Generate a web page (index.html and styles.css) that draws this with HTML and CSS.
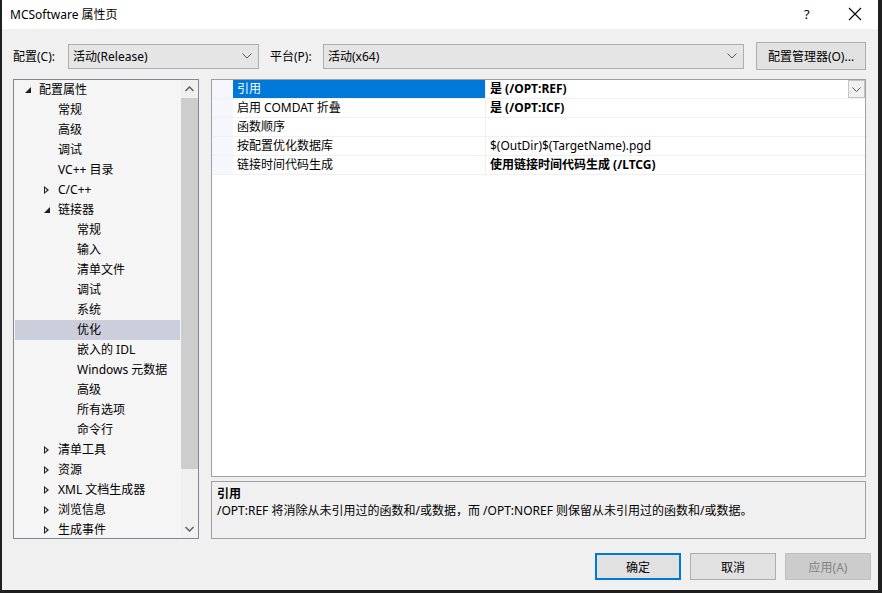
FILE: index.html
```html
<!DOCTYPE html>
<html lang="zh-CN">
<head>
    <meta charset="UTF-8">
    <title>MCSoftware 属性页</title>
    <link rel="stylesheet" href="styles.css">
</head>
<body>
<div class="window">
    <div class="titlebar">
        <span class="title">MCSoftware 属性页</span>
        <span class="help">?</span>
        <svg class="close" width="14" height="14" viewBox="0 0 14 14">
            <path d="M1 1 L13 13 M13 1 L1 13" stroke="#000" stroke-width="1.1" fill="none"/>
        </svg>
    </div>

    <div class="content">
        <div class="config-row">
            <span class="label">配置(C):</span>
            <div class="combo combo-config">
                <span>活动(Release)</span>
                <svg width="10" height="6" viewBox="0 0 10 6"><path d="M0.5 0.5 L5 5 L9.5 0.5" stroke="#555" fill="none"/></svg>
            </div>
            <span class="label label-platform">平台(P):</span>
            <div class="combo combo-platform">
                <span>活动(x64)</span>
                <svg width="10" height="6" viewBox="0 0 10 6"><path d="M0.5 0.5 L5 5 L9.5 0.5" stroke="#555" fill="none"/></svg>
            </div>
            <button class="btn btn-manager">配置管理器(O)...</button>
        </div>

        <div class="main">
            <!-- left tree -->
            <div class="tree">
                <div class="tree-items">
                    <div class="node lv0"><span class="exp open"></span>配置属性</div>
                    <div class="node lv1"><span class="exp"></span>常规</div>
                    <div class="node lv1"><span class="exp"></span>高级</div>
                    <div class="node lv1"><span class="exp"></span>调试</div>
                    <div class="node lv1"><span class="exp"></span>VC++ 目录</div>
                    <div class="node lv0b"><span class="exp closed"></span>C/C++</div>
                    <div class="node lv0b"><span class="exp open"></span>链接器</div>
                    <div class="node lv2">常规</div>
                    <div class="node lv2">输入</div>
                    <div class="node lv2">清单文件</div>
                    <div class="node lv2">调试</div>
                    <div class="node lv2">系统</div>
                    <div class="node lv2 selected">优化</div>
                    <div class="node lv2">嵌入的 IDL</div>
                    <div class="node lv2">Windows 元数据</div>
                    <div class="node lv2">高级</div>
                    <div class="node lv2">所有选项</div>
                    <div class="node lv2">命令行</div>
                    <div class="node lv0b"><span class="exp closed"></span>清单工具</div>
                    <div class="node lv0b"><span class="exp closed"></span>资源</div>
                    <div class="node lv0b"><span class="exp closed"></span>XML 文档生成器</div>
                    <div class="node lv0b"><span class="exp closed"></span>浏览信息</div>
                    <div class="node lv0b"><span class="exp closed"></span>生成事件</div>
                </div>
                <div class="scrollbar">
                    <div class="sb-arrow">
                        <svg width="9" height="6" viewBox="0 0 9 6"><path d="M0.5 5 L4.5 1 L8.5 5" stroke="#606060" stroke-width="1.5" fill="none"/></svg>
                    </div>
                    <div class="sb-track"><div class="sb-thumb"></div></div>
                    <div class="sb-arrow">
                        <svg width="9" height="6" viewBox="0 0 9 6"><path d="M0.5 1 L4.5 5 L8.5 1" stroke="#606060" stroke-width="1.5" fill="none"/></svg>
                    </div>
                </div>
            </div>

            <div class="right">
                <div class="grid">
                    <div class="row">
                        <div class="gutter"></div>
                        <div class="name active">引用</div>
                        <div class="value bold">是 (/OPT:REF)
                            <span class="drop"><svg width="9" height="5" viewBox="0 0 9 5"><path d="M0.5 0.5 L4.5 4.5 L8.5 0.5" stroke="#555" fill="none"/></svg></span>
                        </div>
                    </div>
                    <div class="row">
                        <div class="gutter"></div>
                        <div class="name">启用 COMDAT 折叠</div>
                        <div class="value bold">是 (/OPT:ICF)</div>
                    </div>
                    <div class="row">
                        <div class="gutter"></div>
                        <div class="name">函数顺序</div>
                        <div class="value"></div>
                    </div>
                    <div class="row">
                        <div class="gutter"></div>
                        <div class="name">按配置优化数据库</div>
                        <div class="value">$(OutDir)$(TargetName).pgd</div>
                    </div>
                    <div class="row">
                        <div class="gutter"></div>
                        <div class="name">链接时间代码生成</div>
                        <div class="value bold">使用链接时间代码生成 (/LTCG)</div>
                    </div>
                </div>
                <div class="desc">
                    <div class="desc-title">引用</div>
                    <div class="desc-text">/OPT:REF 将消除从未引用过的函数和/或数据，而 /OPT:NOREF 则保留从未引用过的函数和/或数据。</div>
                </div>
            </div>
        </div>

        <div class="footer">
            <button class="btn btn-default">确定</button>
            <button class="btn">取消</button>
            <button class="btn btn-disabled">应用(A)</button>
        </div>
    </div>
</div>
</body>
</html>
```

FILE: styles.css
```css
/* property page dialog */
body {
    margin: 0;
    background-color: #1f1f1f;
    font-family: "Noto Sans", "Noto Sans CJK SC", sans-serif;
    font-size: 12px;
    color: #000;
}

.window {
    width: 876px;
    height: 590px;
    margin-left: 2px;
    background-color: #f0f0f0;
    display: flex;
    flex-direction: column;
}

.titlebar {
    height: 29px;
    background-color: #fff;
    display: flex;
    align-items: center;
    padding-left: 8px;
    flex-shrink: 0;
}

.title {
    flex: 1;
    font-size: 12px;
    padding-bottom: 2px;
}

.help {
    width: 14px;
    margin-right: 30px;
    font-size: 13px;
    padding-bottom: 2px;
}

.close {
    margin-right: 16px;
    margin-bottom: 2px;
}

.content {
    flex: 1;
    display: flex;
    flex-direction: column;
    padding: 13px 12px 0 11px;
}

/* top row */
.config-row {
    display: flex;
    align-items: center;
    height: 28px;
}

.label {
    width: 55px;
}

.label-platform {
    width: 53px;
    margin-left: 11px;
}

.combo {
    height: 25px;
    box-sizing: border-box;
    border: 1px solid #adadad;
    background-color: #e5e5e5;
    display: flex;
    align-items: center;
    justify-content: space-between;
    padding: 0 6px 0 4px;
}

.combo-config {
    width: 191px;
}

.combo-platform {
    width: 421px;
}

.btn {
    font-family: inherit;
    font-size: 12px;
    color: #000;
    background-color: #e1e1e1;
    border: 1px solid #adadad;
    padding: 0;
    box-sizing: border-box;
    width: 86px;
    height: 27px;
}

.btn-manager {
    width: 110px;
    height: 28px;
    margin-left: 12px;
}

/* main area */
.main {
    display: flex;
    margin-top: 9px;
    gap: 12px;
    height: 460px;
}

.tree {
    width: 186px;
    box-sizing: border-box;
    border: 1px solid #828790;
    background-color: #f5f5f5;
    display: flex;
    overflow: hidden;
}

.tree-items {
    flex: 1;
    padding: 0 1px;
    overflow: hidden;
}

.node {
    height: 20px;
    line-height: 20px;
    white-space: nowrap;
    display: flex;
    align-items: center;
}

.node.selected {
    background-color: #cccedb;
}

.lv0 { padding-left: 9px; }
.lv0b { padding-left: 28px; }
.lv1 { padding-left: 28px; }
.lv2 { padding-left: 62px; }

.exp {
    width: 7px;
    height: 8px;
    margin-right: 8px;
    position: relative;
}

.lv1 .exp {
    visibility: hidden;
}

.exp.open::after {
    content: "";
    position: absolute;
    right: 0;
    bottom: 1px;
    border-style: solid;
    border-width: 0 0 6px 6px;
    border-color: transparent transparent #1e1e1e transparent;
}

.exp.closed::after {
    content: "";
    position: absolute;
    left: 1px;
    top: 0;
    width: 0;
    height: 0;
    border-style: solid;
    border-width: 4px 0 4px 5px;
    border-color: transparent transparent transparent #1e1e1e;
}

.exp.closed::before {
    content: "";
    position: absolute;
    left: 2px;
    top: 2px;
    border-style: solid;
    border-width: 2px 0 2px 2.5px;
    border-color: transparent transparent transparent #f5f5f5;
    z-index: 1;
}

.scrollbar {
    width: 17px;
    background-color: #f0f0f0;
    display: flex;
    flex-direction: column;
}

.sb-arrow {
    height: 18px;
    display: flex;
    align-items: center;
    justify-content: center;
    flex-shrink: 0;
}

.sb-track {
    flex: 1;
}

.sb-thumb {
    height: 371px;
    background-color: #cdcdcd;
}

/* right side */
.right {
    flex: 1;
    display: flex;
    flex-direction: column;
    gap: 4px;
}

.grid {
    flex: 1;
    box-sizing: border-box;
    border: 1px solid #a0a0a0;
    background-color: #fff;
}

.row {
    display: flex;
    height: 19px;
    box-sizing: border-box;
    border-bottom: 1px solid #f0f0f0;
    line-height: 18px;
}

.gutter {
    width: 21px;
    background-color: #f5f7fc;
}

.name {
    width: 248px;
    padding-left: 4px;
    border-right: 1px solid #f0f0f0;
    white-space: nowrap;
}

.name.active {
    background-color: #0078d7;
    color: #fff;
}

.value {
    flex: 1;
    padding-left: 4px;
    position: relative;
    white-space: nowrap;
}

.bold {
    font-weight: bold;
}

.drop {
    position: absolute;
    right: 0;
    top: 0;
    width: 17px;
    height: 18px;
    box-sizing: border-box;
    border: 1px solid #c4c4c4;
    background-color: #f0f0f0;
    display: flex;
    align-items: center;
    justify-content: center;
}

.desc {
    height: 58px;
    box-sizing: border-box;
    border: 1px solid #a0a0a0;
    background-color: #f0f0f0;
    padding: 3px 5px;
}

.desc-title {
    font-weight: bold;
    line-height: 17px;
}

.desc-text {
    line-height: 17px;
}

/* bottom buttons */
.footer {
    display: flex;
    justify-content: flex-end;
    gap: 9px;
    margin-top: 14px;
    margin-right: -5px;
}

.btn-default {
    border: 2px solid #0078d7;
}

.btn-disabled {
    background-color: #cccccc;
    border-color: #bfbfbf;
    color: #838383;
}
```
